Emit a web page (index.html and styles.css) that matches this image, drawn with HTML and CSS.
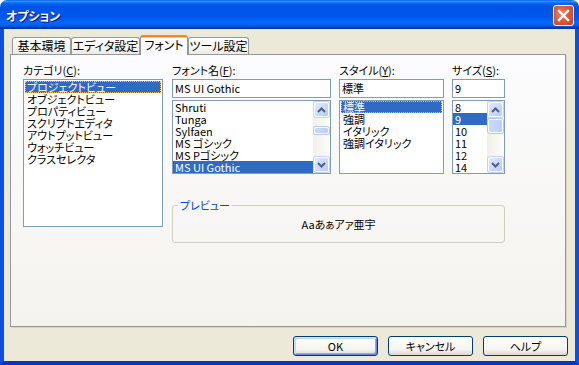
FILE: index.html
```html
<!DOCTYPE html>
<html lang="ja">
<head>
	<meta charset="UTF-8">
	<title>オプション</title>
	<link rel="stylesheet" href="styles.css">
</head>
<body>
	<div class="window">
		<div class="titlebar">
			<span class="title">オプション</span>
			<button class="close" aria-label="閉じる">
				<svg width="13" height="13" viewBox="0 0 13 13"><path d="M2 2 L11 11 M11 2 L2 11" stroke="#fff" stroke-width="2.4" stroke-linecap="square"/></svg>
			</button>
		</div>

		<div class="body">
			<div class="tabs">
				<div class="tab tab-basic">基本環境</div>
				<div class="tab tab-editor">エディタ設定</div>
				<div class="tab tab-font active">フォント</div>
				<div class="tab tab-tool">ツール設定</div>
			</div>

			<div class="panel">
				<div class="category">
					<div class="label">カテゴリ(<u>C</u>):</div>
					<ul class="list list-category">
						<li class="selected focus">プロジェクトビュー</li>
						<li>オブジェクトビュー</li>
						<li>プロパティビュー</li>
						<li>スクリプトエディタ</li>
						<li>アウトプットビュー</li>
						<li>ウォッチビュー</li>
						<li>クラスセレクタ</li>
					</ul>
				</div>

				<div class="fonts">
					<div class="field">
						<div class="label">フォント名(<u>F</u>):</div>
						<div class="textbox">MS UI Gothic</div>
						<div class="list list-scroll">
							<ul class="items">
								<li>Shruti</li>
								<li>Tunga</li>
								<li>Sylfaen</li>
								<li>MS ゴシック</li>
								<li>MS Pゴシック</li>
								<li class="selected">MS UI Gothic</li>
							</ul>
							<div class="scrollbar">
								<div class="sb-btn"><svg width="9" height="6" viewBox="0 0 9 6"><path d="M1 5 L4.5 1.5 L8 5" fill="none" stroke="#4d6185" stroke-width="2"/></svg></div>
								<div class="track"><div class="thumb thumb-font"></div></div>
								<div class="sb-btn"><svg width="9" height="6" viewBox="0 0 9 6"><path d="M1 1 L4.5 4.5 L8 1" fill="none" stroke="#4d6185" stroke-width="2"/></svg></div>
							</div>
						</div>
					</div>

					<div class="field">
						<div class="label">スタイル(<u>Y</u>):</div>
						<div class="textbox">標準</div>
						<ul class="list list-style">
							<li class="selected focus">標準</li>
							<li>強調</li>
							<li>イタリック</li>
							<li>強調イタリック</li>
						</ul>
					</div>

					<div class="field">
						<div class="label">サイズ(<u>S</u>):</div>
						<div class="textbox">9</div>
						<div class="list list-scroll">
							<ul class="items">
								<li>8</li>
								<li class="selected">9</li>
								<li>10</li>
								<li>11</li>
								<li>12</li>
								<li>14</li>
							</ul>
							<div class="scrollbar">
								<div class="sb-btn"><svg width="9" height="6" viewBox="0 0 9 6"><path d="M1 5 L4.5 1.5 L8 5" fill="none" stroke="#4d6185" stroke-width="2"/></svg></div>
								<div class="track"><div class="thumb thumb-size"></div></div>
								<div class="sb-btn"><svg width="9" height="6" viewBox="0 0 9 6"><path d="M1 1 L4.5 4.5 L8 1" fill="none" stroke="#4d6185" stroke-width="2"/></svg></div>
							</div>
						</div>
					</div>

					<fieldset class="preview">
						<legend>プレビュー</legend>
						<div class="sample">Aaあぁアァ亜宇</div>
					</fieldset>
				</div>
			</div>

			<div class="buttons">
				<button class="button default">OK</button>
				<button class="button">キャンセル</button>
				<button class="button">ヘルプ</button>
			</div>
		</div>
	</div>
</body>
</html>
```

FILE: styles.css
```css
* {
	box-sizing: border-box;
}

html, body {
	margin: 0;
	padding: 0;
}

body {
	width: 579px;
	height: 365px;
	overflow: hidden;
	background-color: #fff;
	font-family: "Noto Sans CJK JP", sans-serif;
	font-size: 11px;
	font-feature-settings: "palt";
	color: #000;
}

.window {
	display: flex;
	flex-direction: column;
	height: 365px;
}

/* title bar */
.titlebar {
	flex: none;
	height: 29px;
	display: flex;
	align-items: center;
	justify-content: space-between;
	padding: 2px 5px 0 6px;
	border-radius: 7px 7px 0 0;
	background: linear-gradient(to bottom, #0058ee 0%, #3593ff 4%, #288eff 6%, #127dff 8%, #036ffc 10%, #0262ee 14%, #0057e5 20%, #0054e3 24%, #0055eb 56%, #005bf5 66%, #026afe 76%, #0062ef 86%, #0052d6 92%, #0040ab 94%, #003092 100%);
}

.title {
	color: #fff;
	font-weight: bold;
	font-size: 12px;
	text-shadow: 1px 1px 0 #0f1089;
}

.close {
	width: 21px;
	height: 21px;
	padding: 0;
	border: 1px solid #fff;
	border-radius: 3px;
	background: radial-gradient(circle at 40% 40%, #f0886b 0%, #e0583c 45%, #c4401f 100%);
	display: flex;
	align-items: center;
	justify-content: center;
}

/* window body */
.body {
	flex: 1;
	display: flex;
	flex-direction: column;
	background-color: #ece9d8;
	border: 4px solid #0b4fe3;
	border-top: 0;
	border-bottom-color: #0834c8;
	padding: 6px 7px 0 6px;
}

/* tabs */
.tabs {
	display: flex;
	align-items: flex-end;
	height: 19px;
	margin-left: 2px;
}

.tab {
	height: 17px;
	line-height: 16px;
	font-size: 12px;
	text-align: center;
	white-space: nowrap;
	border: 1px solid #919b9c;
	border-bottom: 0;
	border-radius: 3px 3px 0 0;
	background: linear-gradient(#ffffff, #f4f3ee 70%, #ebe9e1);
}

.tab-basic { width: 59px; }
.tab-editor { width: 69px; }
.tab-font { width: 48px; }
.tab-tool { width: 61px; }

.tab.active {
	position: relative;
	z-index: 1;
	height: 20px;
	margin-bottom: -1px;
	border-top: 2px solid #e68b2c;
	box-shadow: inset 0 1px 0 #ffc83c;
	background: #fcfcfe;
}

/* tab page */
.panel {
	height: 273px;
	margin-right: 2px;
	border: 1px solid #919b9c;
	background: linear-gradient(#fcfcfe, #f4f3ee);
	box-shadow: 1px 1px 0 #d6d3c6;
	padding: 8px 0 0 12px;
	display: flex;
	align-items: flex-start;
}

.label {
	height: 14px;
	line-height: 14px;
	margin-bottom: 2px;
	white-space: nowrap;
}

.category {
	width: 140px;
}

.list {
	margin: 0;
	padding: 0;
	list-style: none;
	border: 1px solid #7f9db9;
	background-color: #fff;
}

.list li,
.items li {
	height: 12px;
	line-height: 12px;
	padding-left: 2px;
	white-space: nowrap;
}

.list-category {
	height: 148px;
	padding: 1px 1px 0;
}

.selected {
	background-color: #316ac5;
	color: #fff;
}

.focus {
	outline: 1px dotted #f6c05e;
	outline-offset: -1px;
}

.fonts {
	margin-left: 9px;
	display: grid;
	grid-template-columns: 159px 105px 53px;
	column-gap: 8px;
}

.textbox {
	height: 19px;
	line-height: 17px;
	padding-left: 2px;
	border: 1px solid #7f9db9;
	background-color: #fff;
	margin-bottom: 2px;
}

.list-style {
	height: 74px;
	padding: 0 1px;
}

.list-scroll {
	height: 74px;
	display: flex;
}

.items {
	flex: 1;
	margin: 0;
	padding: 0;
	list-style: none;
	overflow: hidden;
}

/* scrollbar */
.scrollbar {
	width: 17px;
	display: flex;
	flex-direction: column;
	background: linear-gradient(to right, #f1efe8, #fdfdfa);
}

.sb-btn {
	flex: none;
	height: 15px;
	margin: 1px;
	border: 1px solid #fff;
	border-radius: 2px;
	background: linear-gradient(135deg, #e0e9fe, #b8ccf8);
	box-shadow: 0 0 0 1px #c3d3f8;
	display: flex;
	align-items: center;
	justify-content: center;
}

.track {
	flex: 1;
	padding: 0 1px;
}

.thumb {
	border: 1px solid #fff;
	border-radius: 2px;
	background: linear-gradient(to right, #cbd9fd, #bccffa);
	box-shadow: 0 0 0 1px #b4c8f6;
}

.thumb-font {
	margin-top: 9px;
	height: 7px;
}

.thumb-size {
	margin-top: 1px;
	height: 14px;
}

/* preview group */
.preview {
	grid-column: 1 / -1;
	margin: 25px 0 0;
	padding: 0;
	min-width: 0;
	border: 1px solid #d0d0bf;
	border-radius: 3px;
}

.preview legend {
	margin-left: 5px;
	padding: 0 2px;
	line-height: 12px;
	color: #0046d5;
}

.sample {
	text-align: center;
	line-height: 14px;
	padding: 6px 0 11px;
}

/* buttons */
.buttons {
	display: flex;
	justify-content: flex-end;
	gap: 10px;
	margin-top: 9px;
}

.button {
	width: 85px;
	height: 20px;
	padding: 0;
	font: inherit;
	line-height: 18px;
	color: #000;
	border: 1px solid #003c74;
	border-radius: 3px;
	background: linear-gradient(#ffffff, #f5f4ef 70%, #dcd8cc);
}

.button.default {
	box-shadow: inset 1px 1px 0 #cee7ff, inset -1px -1px 0 #6982ee, inset 2px 2px 0 #bcd4f6, inset -2px -2px 0 #89ade4;
}
```
